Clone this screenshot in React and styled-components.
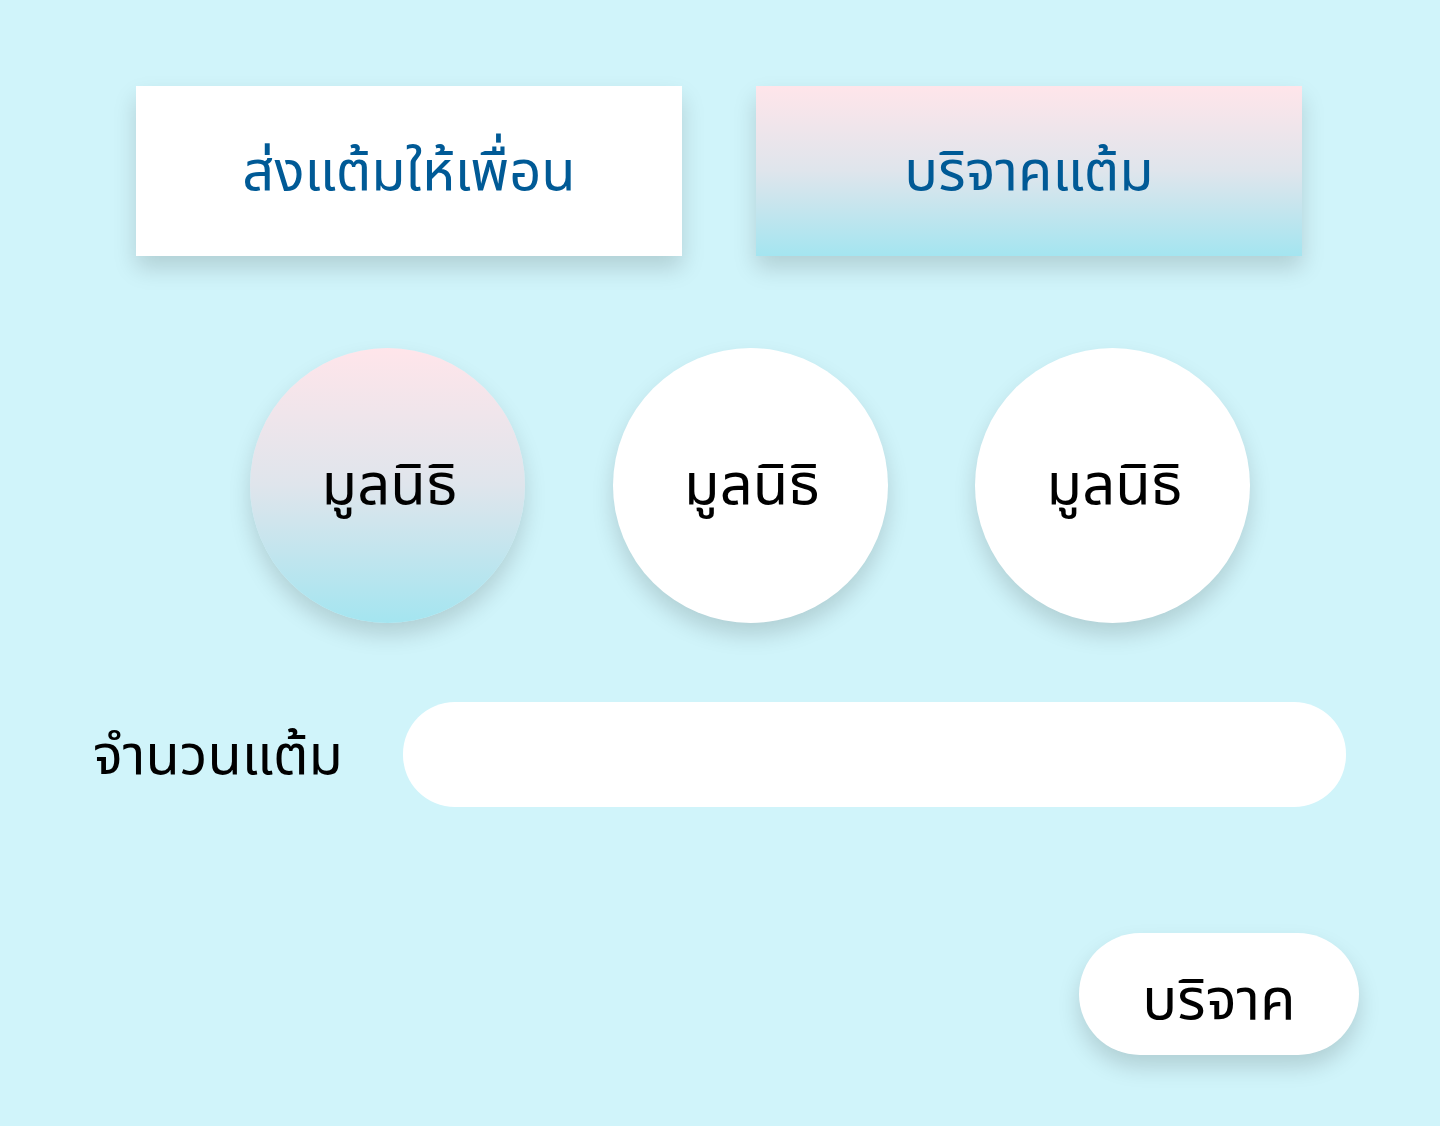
import React from "react";
import styled, { createGlobalStyle } from "styled-components";

const Global = createGlobalStyle`
  *, *::before, *::after { box-sizing: border-box; }
  body { margin: 0; background: #d0f4fa; }
  button, input { font: inherit; color: inherit; border: 0; margin: 0; }
  button { cursor: pointer; }
`;

const warm = "linear-gradient(180deg, #ffe5ea 0%, #dfe5ec 50%, #a4e5f0 100%)";
const shadow = "0 12px 22px rgba(0, 0, 0, 0.15)";

const Page = styled.main`
  min-height: 100vh;
  padding: 86px 0 70px;
  background: #d0f4fa;
  color: #000;
  font-family: "Noto Sans Thai", "Noto Sans", "DejaVu Sans", sans-serif;
  font-size: 56px;
  line-height: 64px;
`;

const Tabs = styled.nav`
  display: grid;
  grid-template-columns: 1fr 1fr;
  gap: 74px;
  padding: 0 138px 0 136px;
`;

const Tab = styled.button`
  height: 170px;
  padding: 4px 0 0;
  background: ${(p) => (p.$active ? warm : "#fff")};
  color: #005a96;
  white-space: nowrap;
  box-shadow: ${shadow};
`;

const Choices = styled.div`
  display: flex;
  justify-content: space-between;
  margin-top: 92px;
  padding: 0 190px 0 250px;
`;

const Choice = styled.button`
  width: 275px;
  height: 275px;
  padding: 0 0 0 4px;
  border-radius: 50%;
  background: ${(p) => (p.$active ? warm : "#fff")};
  font-size: 58px;
  box-shadow: ${shadow};
`;

const Field = styled.div`
  display: flex;
  align-items: center;
  gap: 60px;
  margin-top: 79px;
  padding: 0 94px 0 93px;
`;

const Label = styled.label`
  flex: 0 0 250px;
  padding-top: 4px;
  white-space: nowrap;
`;

const Input = styled.input`
  flex: 1;
  min-width: 0;
  height: 105px;
  padding: 0 48px;
  border-radius: 52px;
  background: #fff;
`;

const Actions = styled.div`
  display: flex;
  justify-content: flex-end;
  margin-top: 126px;
  padding-right: 81px;
`;

const Submit = styled.button`
  width: 280px;
  height: 122px;
  padding: 14px 0 0;
  border-radius: 61px;
  background: #fff;
  font-size: 58px;
  box-shadow: ${shadow};
`;

const foundations = ["first", "second", "third"];

export default function App() {
  return (
    <Page>
      <Global />
      <Tabs>
        <Tab type="button">ส่งแต้มให้เพื่อน</Tab>
        <Tab type="button" $active>บริจาคแต้ม</Tab>
      </Tabs>
      <Choices>
        {foundations.map((id, i) => (
          <Choice type="button" key={id} $active={i === 0}>มูลนิธิ</Choice>
        ))}
      </Choices>
      <Field>
        <Label htmlFor="points">จำนวนแต้ม</Label>
        <Input id="points" type="text" inputMode="numeric" />
      </Field>
      <Actions>
        <Submit type="button">บริจาค</Submit>
      </Actions>
    </Page>
  );
}
